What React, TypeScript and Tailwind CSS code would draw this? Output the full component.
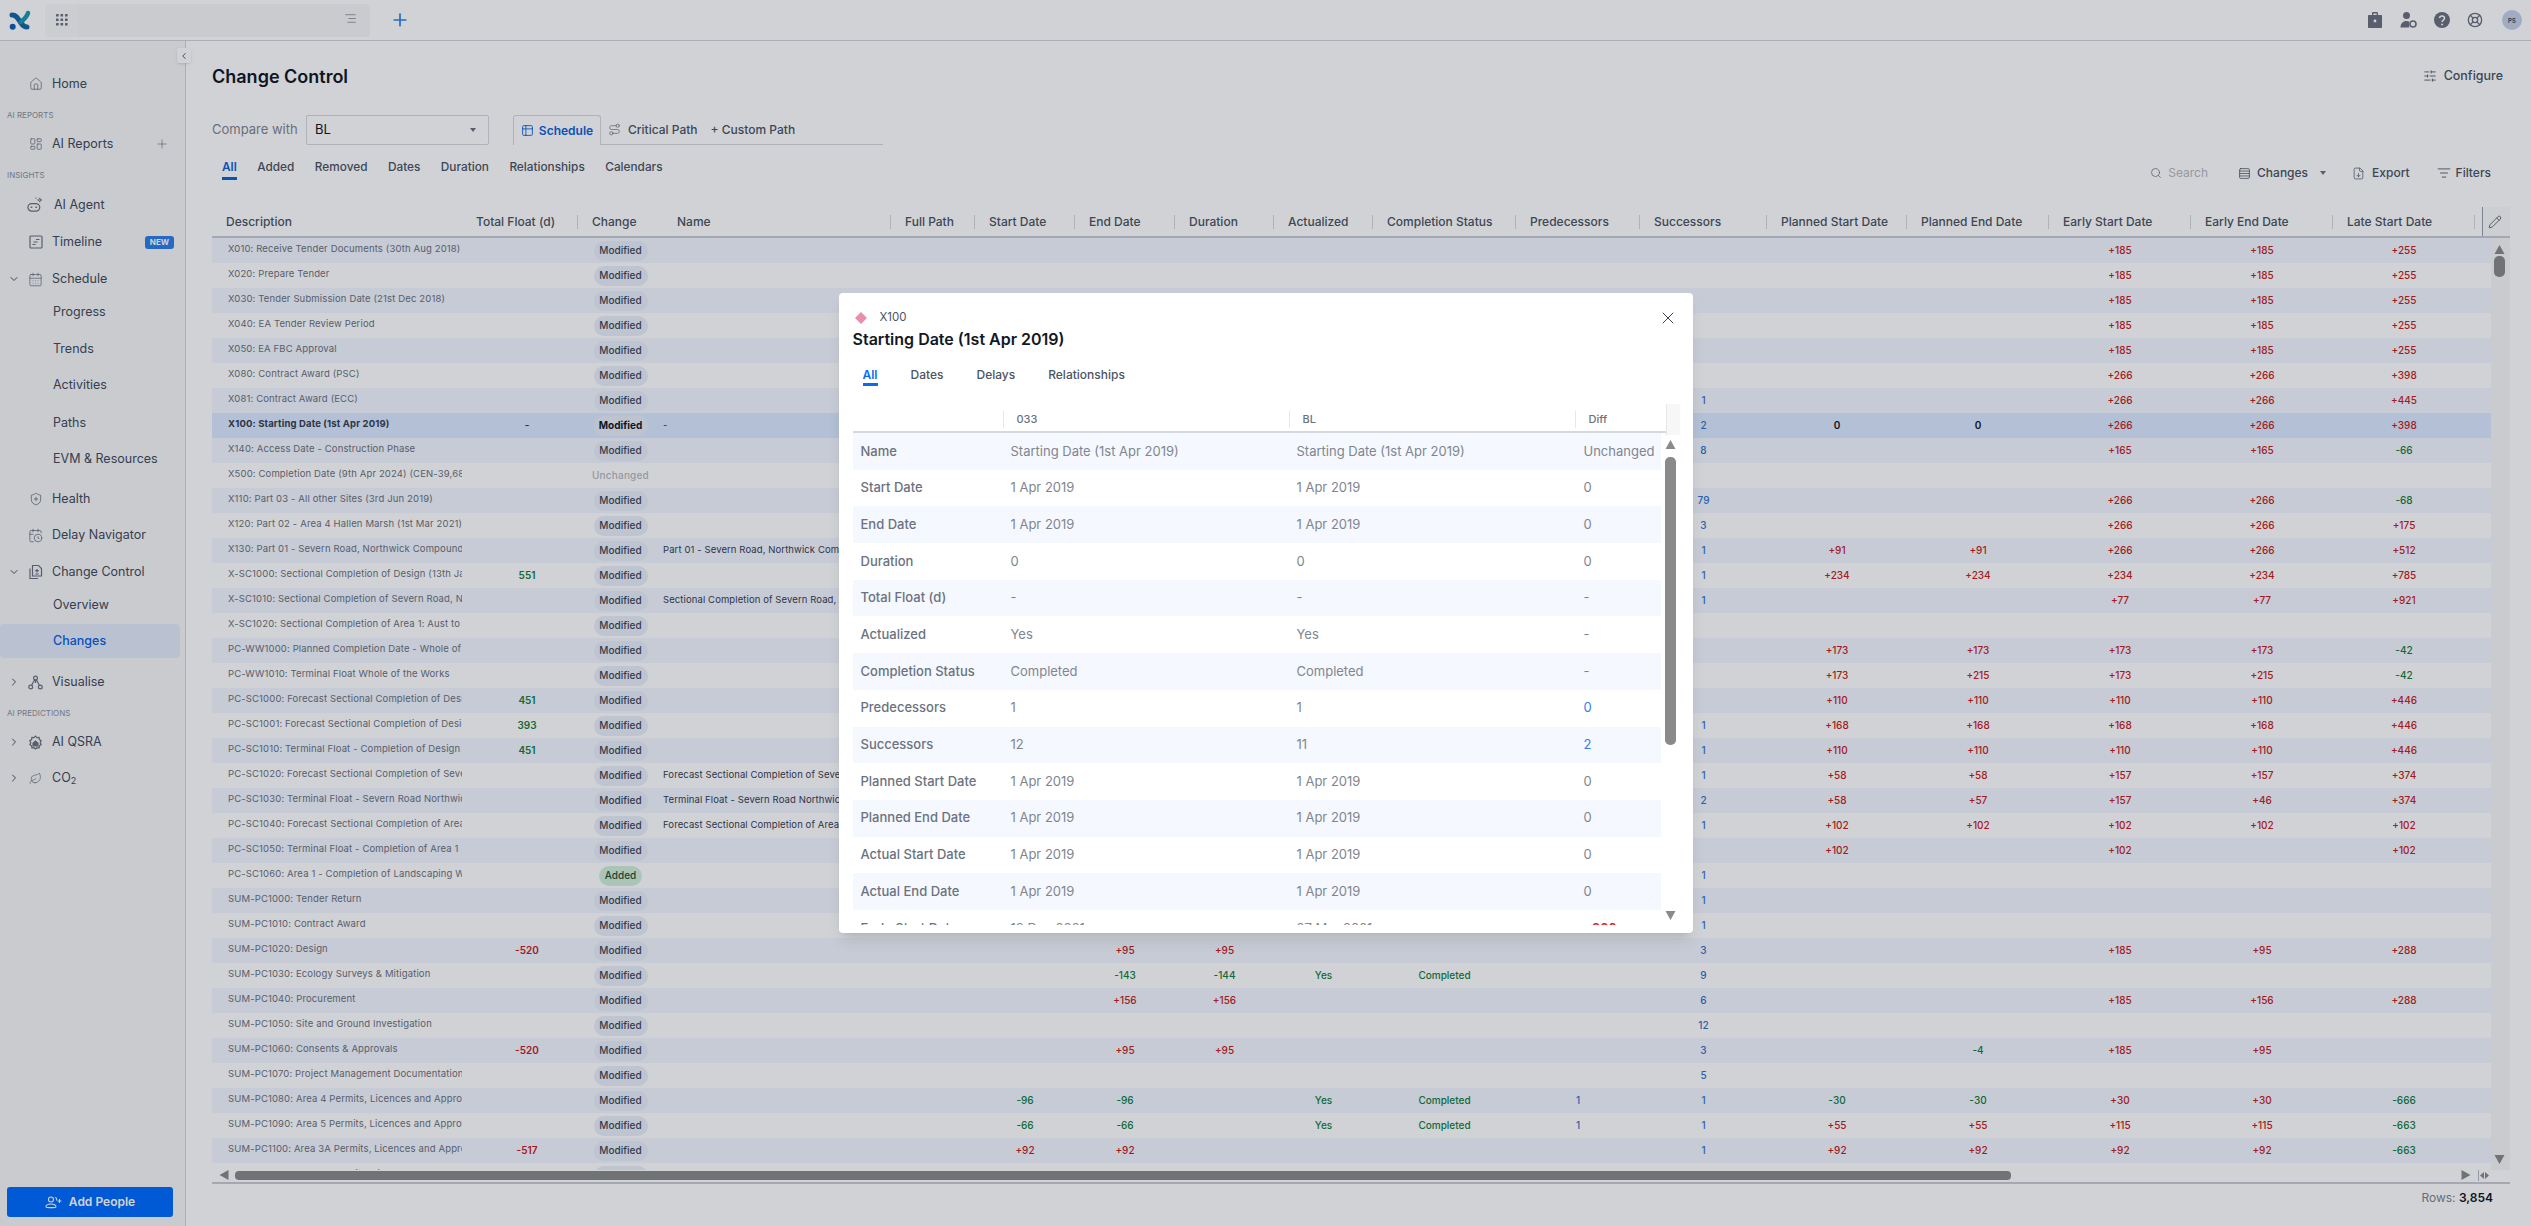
import React from 'react';
import {
  AlignRight, CalendarClock, CalendarDays, ChevronDown, ChevronLeft, ChevronRight, FileDown, Home, LayoutDashboard, Leaf,
  LifeBuoy, ListFilter, Pencil, Plus, Route, Rows4, Search, ShieldPlus, SlidersHorizontal, Table2, X,
} from 'lucide-react';

const GRID = 'grid grid-cols-[250px_116px_85px_228px_84px_100px_100px_99px_99px_143px_124px_127px_140px_142px_142px_142px_142px_16px]';

const HEADERS: [string, boolean][] = [
  ['Description', false], ['Total Float (d)', true], ['Change', false], ['Name', true], ['Full Path', true],
  ['Start Date', true], ['End Date', true], ['Duration', true], ['Actualized', true], ['Completion Status', true],
  ['Predecessors', true], ['Successors', true], ['Planned Start Date', true], ['Planned End Date', true],
  ['Early Start Date', true], ['Early End Date', true], ['Late Start Date', true],
];

// start|end|dur|actualized|status|pred|succ|plannedStart|plannedEnd|earlyStart|earlyEnd|lateStart
const ROWS: [string, string, string, string, string][] = [
  ['X010: Receive Tender Documents (30th Aug 2018)', '', 'Modified', '', '|||||||||+185|+185|+255'],
  ['X020: Prepare Tender', '', 'Modified', '', '|||||||||+185|+185|+255'],
  ['X030: Tender Submission Date (21st Dec 2018)', '', 'Modified', '', '|||||||||+185|+185|+255'],
  ['X040: EA Tender Review Period', '', 'Modified', '', '|||||||||+185|+185|+255'],
  ['X050: EA FBC Approval', '', 'Modified', '', '|||||||||+185|+185|+255'],
  ['X080: Contract Award (PSC)', '', 'Modified', '', '|||||||||+266|+266|+398'],
  ['X081: Contract Award (ECC)', '', 'Modified', '', '||||||1|||+266|+266|+445'],
  ['X100: Starting Date (1st Apr 2019)', '-', 'Modified', '-', '||||||2|0|0|+266|+266|+398'],
  ['X140: Access Date - Construction Phase', '', 'Modified', '', '||||||8|||+165|+165|-66'],
  ['X500: Completion Date (9th Apr 2024) (CEN-39,686)', '', 'Unchanged', '', '|||||||||||'],
  ['X110: Part 03 - All other Sites (3rd Jun 2019)', '', 'Modified', '', '||||||79|||+266|+266|-68'],
  ['X120: Part 02 - Area 4 Hallen Marsh (1st Mar 2021)', '', 'Modified', '', '||||||3|||+266|+266|+175'],
  ['X130: Part 01 - Severn Road, Northwick Compound (1st Dec 2020)', '', 'Modified', 'Part 01 - Severn Road, Northwick Compound', '||||||1|+91|+91|+266|+266|+512'],
  ['X-SC1000: Sectional Completion of Design (13th Jan 2023)', '551', 'Modified', '', '||||||1|+234|+234|+234|+234|+785'],
  ['X-SC1010: Sectional Completion of Severn Road, Northwick', '', 'Modified', 'Sectional Completion of Severn Road, Northwick', '||||||1|||+77|+77|+921'],
  ['X-SC1020: Sectional Completion of Area 1: Aust to Northwick', '', 'Modified', '', '|||||||||||'],
  ['PC-WW1000: Planned Completion Date - Whole of the Works', '', 'Modified', '', '|||||||+173|+173|+173|+173|-42'],
  ['PC-WW1010: Terminal Float Whole of the Works', '', 'Modified', '', '|||||||+173|+215|+173|+215|-42'],
  ['PC-SC1000: Forecast Sectional Completion of Design', '451', 'Modified', '', '|||||||+110|+110|+110|+110|+446'],
  ['PC-SC1001: Forecast Sectional Completion of Design', '393', 'Modified', '', '||||||1|+168|+168|+168|+168|+446'],
  ['PC-SC1010: Terminal Float - Completion of Design', '451', 'Modified', '', '||||||1|+110|+110|+110|+110|+446'],
  ['PC-SC1020: Forecast Sectional Completion of Severn Road', '', 'Modified', 'Forecast Sectional Completion of Severn Road', '||||||1|+58|+58|+157|+157|+374'],
  ['PC-SC1030: Terminal Float - Severn Road Northwick', '', 'Modified', 'Terminal Float - Severn Road Northwick', '||||||2|+58|+57|+157|+46|+374'],
  ['PC-SC1040: Forecast Sectional Completion of Area 1', '', 'Modified', 'Forecast Sectional Completion of Area 1', '||||||1|+102|+102|+102|+102|+102'],
  ['PC-SC1050: Terminal Float - Completion of Area 1', '', 'Modified', '', '|||||||+102||+102||+102'],
  ['PC-SC1060: Area 1 - Completion of Landscaping Works', '', 'Added', '', '||||||1|||||'],
  ['SUM-PC1000: Tender Return', '', 'Modified', '', '||||||1|||||'],
  ['SUM-PC1010: Contract Award', '', 'Modified', '', '||||||1|||||'],
  ['SUM-PC1020: Design', '-520', 'Modified', '', '|+95|+95||||3|||+185|+95|+288'],
  ['SUM-PC1030: Ecology Surveys & Mitigation', '', 'Modified', '', '|-143|-144|Yes|Completed||9|||||'],
  ['SUM-PC1040: Procurement', '', 'Modified', '', '|+156|+156||||6|||+185|+156|+288'],
  ['SUM-PC1050: Site and Ground Investigation', '', 'Modified', '', '||||||12|||||'],
  ['SUM-PC1060: Consents & Approvals', '-520', 'Modified', '', '|+95|+95||||3||-4|+185|+95|'],
  ['SUM-PC1070: Project Management Documentation', '', 'Modified', '', '||||||5|||||'],
  ['SUM-PC1080: Area 4 Permits, Licences and Approvals', '', 'Modified', '', '-96|-96||Yes|Completed|1|1|-30|-30|+30|+30|-666'],
  ['SUM-PC1090: Area 5 Permits, Licences and Approvals', '', 'Modified', '', '-66|-66||Yes|Completed|1|1|+55|+55|+115|+115|-663'],
  ['SUM-PC1100: Area 3A Permits, Licences and Approvals', '-517', 'Modified', '', '+92|+92|||||1|+92|+92|+92|+92|-663'],
  ['SUM-PC1110: Area 3B Permits, Licences and Approvals', '', 'Modified', '', '|||||||||||'],
];

const DETAIL: [string, string, string, string][] = [
  ['Name', 'Starting Date (1st Apr 2019)', 'Starting Date (1st Apr 2019)', 'Unchanged'],
  ['Start Date', '1 Apr 2019', '1 Apr 2019', '0'],
  ['End Date', '1 Apr 2019', '1 Apr 2019', '0'],
  ['Duration', '0', '0', '0'],
  ['Total Float (d)', '-', '-', '-'],
  ['Actualized', 'Yes', 'Yes', '-'],
  ['Completion Status', 'Completed', 'Completed', '-'],
  ['Predecessors', '1', '1', '0'],
  ['Successors', '12', '11', '2'],
  ['Planned Start Date', '1 Apr 2019', '1 Apr 2019', '0'],
  ['Planned End Date', '1 Apr 2019', '1 Apr 2019', '0'],
  ['Actual Start Date', '1 Apr 2019', '1 Apr 2019', '0'],
  ['Actual End Date', '1 Apr 2019', '1 Apr 2019', '0'],
  ['Early Start Date', '18 Dec 2021', '27 Mar 2021', '+266'],
];

const valueColor = (v: string, col: number, selected: boolean) => {
  if (col === 5 || col === 6) return 'text-[#2f74d0]';
  if (v === 'Yes' || v === 'Completed' || v.startsWith('-')) return 'text-[#15803d]';
  if (v.startsWith('+')) return 'text-[#c81e1e]';
  return selected ? 'text-[#111827] font-semibold' : 'text-[#374151]';
};

const Triangle: React.FC<{ dir: 'up' | 'down' | 'left' | 'right'; color?: string }> = ({ dir, color = '#8a8a8a' }) => {
  const points = { up: '5,1 10,10 0,10', down: '0,1 10,1 5,10', left: '10,0 10,10 1,5', right: '0,0 0,10 9,5' }[dir];
  return (
    <svg width="11" height="11" viewBox="0 0 10 11" className="shrink-0">
      <polygon points={points} fill={color} />
    </svg>
  );
};

const Logo = () => (
  <svg width="24" height="24" viewBox="8 8 24 24" fill="none" className="ml-[8px]">
    <path d="M12 15c5 0 6 4 9 8 2 3 4 4 6 4" stroke="#1268a8" strokeWidth="5" strokeLinecap="round" />
    <path d="M28 13c-1 4-4 6-7 9" stroke="#1a9bb0" strokeWidth="4.5" strokeLinecap="round" />
    <circle cx="12.7" cy="26.7" r="3" fill="#0a5fb4" />
  </svg>
);

const GridDots = () => (
  <svg width="12" height="12" viewBox="0 0 12 12" fill="#6b7280">
    {[0, 4.5, 9].map(y => [0, 4.5, 9].map(x => <rect key={`${x}-${y}`} x={x} y={y} width="2.6" height="2.6" rx="0.4" />))}
  </svg>
);

const BotIcon = () => (
  <svg width="18" height="18" viewBox="0 0 18 18" fill="none" stroke="#6b7280" strokeWidth="1.3">
    <rect x="1" y="7.5" width="12.5" height="8" rx="4" />
    <path d="M4.5 11.5h.5M9.5 11.5h.5" strokeLinecap="round" strokeWidth="1.6" />
    <path d="M13.5 1.5l.6 1.6 1.6.6-1.6.6-.6 1.6-.6-1.6-1.6-.6 1.6-.6zM9.5 1v1.4" strokeWidth="1" />
  </svg>
);

const TimelineIcon = () => (
  <svg width="14" height="14" viewBox="0 0 14 14" fill="none" stroke="#6b7280" strokeWidth="1.2">
    <rect x="1" y="1" width="12" height="12" rx="1" />
    <path d="M7 4.5h3.5M4.5 7h4M3.5 9.5h3" />
  </svg>
);

const StackIcon = () => (
  <svg width="15" height="16" viewBox="0 0 15 16" fill="none" stroke="#6b7280" strokeWidth="1.2">
    <path d="M4.5 1.5h6l3 3v7.5h-9z" />
    <path d="M2 4.5v10h8M9 5v3.5M7.2 6.7h3.6M7.2 10h3.6" />
  </svg>
);

const GraphIcon = () => (
  <svg width="15" height="15" viewBox="0 0 15 15" fill="none" stroke="#6b7280" strokeWidth="1.2">
    <circle cx="7.5" cy="3" r="1.9" />
    <circle cx="2.7" cy="12" r="1.9" />
    <circle cx="12.3" cy="12" r="1.9" />
    <path d="M6.7 4.8L3.6 10.3M8.3 4.8l3.1 5.5M7.5 5v3" />
  </svg>
);

const QsraIcon = () => (
  <svg width="15" height="15" viewBox="0 0 15 15" fill="none" stroke="#6b7280" strokeWidth="1.2">
    <path d="M7.5 1.2l1.5 1.500 2.100-.2.3 2.100 1.800 1.200-1 1.900 1 1.900-1.800 1.200-.3 2.100-2.100-.2-1.500 1.300-1.500-1.300-2.100.2-.3-2.100L1.800 9.600l1-1.900-1-1.900 1.800-1.200.3-2.100 2.100.2z" />
    <path d="M5 8.200l2.500-2.200L10 8.200v2.600H5z" fill="#6b7280" />
  </svg>
);

const Briefcase = () => (
  <svg width="16" height="18" viewBox="0 0 16 18" fill="#6b7280">
    <path d="M5 4V2.200C5 1.500 5.600 1 6.200 1h3.600c.6 0 1.200.5 1.200 1.200V4h3c.6 0 1 .4 1 1v11c0 .6-.4 1-1 1H2c-.6 0-1-.4-1-1V5c0-.6.4-1 1-1zm1.400 0h3.200V2.400H6.400z" />
    <circle cx="8" cy="10" r="1.400" fill="#ffffff" />
  </svg>
);

const UserGear = () => (
  <svg width="17" height="18" viewBox="0 0 17 18" fill="#6b7280">
    <circle cx="6.500" cy="4.500" r="3.500" />
    <path d="M0.500 16.500c0-4 2.500-6.500 6-6.500 1 0 1.900.2 2.600.6V16.500z" />
    <circle cx="13" cy="13" r="3" fill="none" stroke="#6b7280" strokeWidth="1.600" />
  </svg>
);

const HelpFilled = () => (
  <svg width="16" height="18" viewBox="0 0 18 18">
    <circle cx="9" cy="9" r="9" fill="#6b7280" />
    <path d="M6.200 6.800C6.400 5.300 7.500 4.500 9 4.500c1.600 0 2.800 1 2.800 2.400 0 2.200-2.700 2.200-2.700 4.300" fill="none" stroke="#fff" strokeWidth="1.700" />
    <circle cx="9.100" cy="14" r="1.100" fill="#fff" />
  </svg>
);

const Section: React.FC<{ label: string; className: string }> = ({ label, className }) => (
  <div className={`h-4 flex items-center pl-[7px] text-[8px] text-[#8b919c] ${className}`}>{label}</div>
);

const NavItem: React.FC<{
  icon: React.ReactNode; label: React.ReactNode; className?: string; chevron?: 'down' | 'right'; right?: React.ReactNode; textClass?: string;
}> = ({ icon, label, className = '', chevron, right, textClass = 'ml-[8px]' }) => (
  <div className={`h-9 flex items-center relative pr-[12px] text-[12.5px] text-[#424c5c] ${className}`}>
    <div className="w-[27px] flex justify-end pr-[7px]">
      {chevron === 'down' && <ChevronDown size={12} strokeWidth={2} className="text-[#4b5563]" />}
      {chevron === 'right' && <ChevronRight size={12} strokeWidth={2} className="text-[#4b5563]" />}
    </div>
    <div className="w-[17px] flex justify-center">{icon}</div>
    <span className={textClass}>{label}</span>
    <div className="ml-auto">{right}</div>
  </div>
);

const SubItem: React.FC<{ label: string; className?: string; active?: boolean }> = ({ label, className = '', active }) => (
  <div className={`flex items-center pl-[53px] text-[12.5px] ${active ? 'h-[34px] mr-[5px] rounded-[4px] bg-[#e3ecfb] font-medium text-[#0b62e0]' : 'h-9 text-[#424c5c]'} ${className}`}>
    {label}
  </div>
);

const Sidebar = () => (
  <aside className="w-[186px] shrink-0 flex flex-col border-r border-[#d0d3d9] bg-[#f5f6f8] relative">
    <div className="pt-[25px] flex flex-col">
      <NavItem icon={<Home size={14} strokeWidth={1.3} className="text-[#6b7280]" />} label="Home" />
      <Section label="AI REPORTS" className="mt-[5px]" />
      <NavItem
        className="mt-[3px]"
        icon={<LayoutDashboard size={14} strokeWidth={1.3} className="text-[#6b7280]" />}
        label="AI Reports"
        right={<Plus size={14} strokeWidth={1.1} className="text-[#6b7280] mr-[4px]" />}
      />
      <Section label="INSIGHTS" className="mt-[5px]" />
      <NavItem className="mt-1" icon={<BotIcon />} label="AI Agent" textClass="ml-[10px]" />
      <NavItem
        className="mt-px"
        icon={<TimelineIcon />}
        label="Timeline"
        right={<span className="block -mr-[1px] h-[13px] w-[29px] rounded-[3px] bg-[#2f7fe8] text-center text-[8px] leading-[13px] font-bold text-white">NEW</span>}
      />
      <NavItem className="mt-px" chevron="down" icon={<CalendarDays size={15} strokeWidth={1.2} className="text-[#6b7280]" />} label="Schedule" />
      <SubItem label="Progress" className="-mt-[3px]" />
      <SubItem label="Trends" className="mt-px" />
      <SubItem label="Activities" />
      <SubItem label="Paths" className="mt-[2px]" />
      <SubItem label="EVM & Resources" />
      <NavItem className="mt-1" icon={<ShieldPlus size={14} strokeWidth={1.4} className="text-[#6b7280]" />} label="Health" />
      <NavItem icon={<CalendarClock size={15} strokeWidth={1.3} className="text-[#6b7280]" />} label="Delay Navigator" />
      <NavItem className="mt-px" chevron="down" icon={<StackIcon />} label="Change Control" />
      <SubItem label="Overview" className="-mt-[3px]" />
      <SubItem label="Changes" className="mt-px" active />
      <NavItem className="mt-[6px]" chevron="right" icon={<GraphIcon />} label="Visualise" />
      <Section label="AI PREDICTIONS" className="mt-[5px]" />
      <NavItem className="mt-[3px]" chevron="right" icon={<QsraIcon />} label="AI QSRA" />
      <NavItem
        chevron="right"
        icon={<Leaf size={13} strokeWidth={1.3} className="text-[#6b7280]" />}
        label={<>CO<sub className="text-[9px]">2</sub></>}
      />
    </div>
    <button className="mt-auto mb-[9px] ml-[7px] mr-[12px] h-[30px] flex items-center justify-center gap-[7px] rounded-[3px] bg-[#006bff] text-[12px] font-semibold text-white">
      <svg width="17" height="13" viewBox="0 0 17 13" fill="none" stroke="#fff" strokeWidth="1.100">
        <circle cx="6" cy="3.500" r="2.500" />
        <path d="M1 11c0-2 2-3 5-3s5 1 5 3c0 1-10 1-10 0zM10 1.500c1.500.2 2 1.500 1.500 3M14.500 3v4M12.500 5h4" />
      </svg>
      Add People
    </button>
    <div className="absolute left-[177px] top-[7px] w-[14px] h-[15px] rounded-[2px] bg-white shadow-sm flex items-center justify-center">
      <ChevronLeft size={10} strokeWidth={2} className="text-[#374151]" />
    </div>
  </aside>
);

const TopBar = () => (
  <header className="h-[41px] shrink-0 flex items-center border-b border-[#d0d3d9] bg-white">
    <Logo />
    <div className="ml-[13px] w-[325px] h-[33px] flex items-center rounded-[4px] bg-[#f5f6f8]">
      <div className="w-[33px] h-full flex items-center justify-center rounded-l-[4px] bg-[#f8f9fa]"><GridDots /></div>
      <AlignRight size={13} strokeWidth={1.2} className="ml-auto mr-[13px] mb-[4px] text-[#6b7280]" />
    </div>
    <Plus size={20} strokeWidth={2} className="ml-[20px] text-[#2f7fe8]" />
    <div className="ml-auto flex items-center gap-[17px] pr-[9px]">
      <Briefcase />
      <UserGear />
      <HelpFilled />
      <LifeBuoy size={16} strokeWidth={2} className="text-[#6b7280]" />
      <div className="ml-[2px] w-5 h-5 rounded-full bg-[#c3d1ea] flex items-center justify-center text-[6px] font-semibold text-[#374151]">PS</div>
    </div>
  </header>
);

const Toolbar = () => (
  <div className="mt-[5px] h-6 flex items-center pr-[19px] text-[12px] font-medium text-[#4b5563]">
    <Search size={12} strokeWidth={1.5} className="text-[#6b7280]" />
    <span className="ml-[6px] font-normal text-[#b4b9c2]">Search</span>
    <Rows4 size={13} strokeWidth={1.4} className="ml-[30px] text-[#4b5563]" />
    <span className="ml-[6px]">Changes</span>
    <svg width="6" height="4" viewBox="0 0 6 4" className="ml-[12px]"><polygon points="0,0 6,0 3,4" fill="#6b7280" /></svg>
    <FileDown size={13} strokeWidth={1.3} className="ml-[26px] text-[#4b5563]" />
    <span className="ml-[7px]">Export</span>
    <ListFilter size={14} strokeWidth={1.5} className="ml-[27px] text-[#4b5563]" />
    <span className="ml-[5px]">Filters</span>
  </div>
);

const ChangePill: React.FC<{ kind: string; selected: boolean }> = ({ kind, selected }) => {
  if (kind === 'Unchanged') return <span className="text-[10px] font-medium tracking-[0.2px] text-[#b4b9c2]">Unchanged</span>;
  if (kind === 'Added') return <span className="h-5 w-[43px] rounded-full bg-[#d0efdc] flex items-center justify-center text-[10px] font-medium text-[#1f5135]">Added</span>;
  return (
    <span className={`h-5 w-[54px] rounded-full flex items-center justify-center text-[10px] ${selected ? 'bg-[#e8eef8] font-bold text-[#111827]' : 'bg-[#e9eefa] font-medium text-[#3f4754]'}`}>
      Modified
    </span>
  );
};

const TableRow: React.FC<{ row: [string, string, string, string, string]; index: number }> = ({ row, index }) => {
  const [desc, tf, change, name, rest] = row;
  const selected = index === 7;
  const cells = rest.split('|');
  return (
    <div className={`${GRID} h-[25px] shrink-0 ${selected ? 'bg-[#dbe9ff]' : index % 2 === 0 ? 'bg-[#f1f6ff]' : 'bg-white'}`}>
      <div className={`pl-[16px] flex items-center pb-[2px] overflow-hidden whitespace-nowrap text-[9.5px] tracking-[0.14px] ${selected ? 'font-bold text-[#374151]' : 'text-[#6b7280]'}`}>
        {desc}
      </div>
      <div className={`pl-[14px] flex items-center justify-center text-[10px] font-semibold ${tf === '-' ? 'text-[#374151]' : tf.startsWith('-') ? 'text-[#c81e1e]' : 'text-[#15803d]'}`}>
        {tf}
      </div>
      <div className="flex items-center justify-center"><ChangePill kind={change} selected={selected} /></div>
      <div className="flex items-center overflow-hidden whitespace-nowrap text-[9.5px] tracking-[0.1px] text-[#374151]">{name}</div>
      <div />
      {cells.map((v, i) => (
        <div key={i} className={`flex items-center justify-center text-[10px] font-medium ${valueColor(v, i, selected)}`}>{v}</div>
      ))}
    </div>
  );
};

const ChangeTable = () => (
  <div className="mt-[21px] flex-col flex">
    <div className="flex h-[31px] border-b-2 border-[#c8ccd3]">
      <div className="grid grid-cols-[250px_116px_85px_228px_84px_100px_100px_99px_99px_143px_124px_127px_140px_142px_142px_142px_142px]">
        {HEADERS.map(([label, divider]) => (
          <div key={label} className="flex items-center pl-[14px] text-[12px] font-medium whitespace-nowrap text-[#4b5563]">
            {label}
            {divider && <span className="ml-auto w-px h-[14px] bg-[#d5d8dd]" />}
          </div>
        ))}
      </div>
      <div className="ml-[7px] w-[28px] flex items-center justify-center border-l border-[#9aa0aa] bg-[#fafafa]">
        <Pencil size={14} strokeWidth={1.4} className="text-[#4b5563] ml-[-4px]" />
      </div>
    </div>
    <div className="flex h-[932px] overflow-hidden">
      <div className="flex flex-col">
        {ROWS.map((row, i) => <TableRow key={row[0]} row={row} index={i} />)}
      </div>
      <div className="w-[19px] flex flex-col items-center pr-[2px] pt-[6px] pb-[5px] bg-[#f5f6f8]">
        <Triangle dir="up" />
        <div className="mt-[1px] w-[11px] h-[21px] rounded-[5px] bg-[#8a8a8a]" />
        <div className="mt-auto"><Triangle dir="down" /></div>
      </div>
    </div>
    <div className="h-[14px] flex items-center border-b-2 border-[#c8ccd3] pb-[1px] pl-[6px]">
      <Triangle dir="left" />
      <div className="ml-[6px] w-[1776px] h-[9px] rounded-[4px] bg-[#8a8a8a]" />
      <div className="ml-[450px]"><Triangle dir="right" /></div>
      <div className="ml-[6px] h-full flex items-center border-l border-[#b4b9c2] pl-[1px]">
        <svg width="9" height="7" viewBox="0 0 9 7"><polygon points="4,0 4,7 0,3.500" fill="#8a8a8a" /><polygon points="5,0 5,7 9,3.500" fill="#8a8a8a" /></svg>
      </div>
    </div>
  </div>
);

const DetailModal = () => (
  <div className="w-[854px] h-[640px] flex flex-col rounded-[4px] bg-white pl-[14px] pr-[13px] pt-[16px] pb-[8px] shadow-lg">
    <div className="h-4 mt-px flex items-center pl-[2px]">
      <svg width="12" height="12" viewBox="0 0 12 12"><polygon points="6,0 12,6 6,12 0,6" fill="#e88fb0" /></svg>
      <span className="ml-[13px] text-[11.5px] text-[#4b5563]">X100</span>
      <X size={20} strokeWidth={1.2} className="ml-auto mr-[2px] text-[#374151]" />
    </div>
    <div className="mt-[2px] h-[22px] flex items-center text-[16px] font-semibold text-[#111827]">Starting Date (1st Apr 2019)</div>
    <div className="mt-[16px] h-5 flex pl-[10px] text-[12px] font-medium text-[#4b5563]">
      <div className="h-full border-b-[3px] border-[#0b6bf0] font-semibold text-[#0b6bf0]">All</div>
      <div className="ml-[33px]">Dates</div>
      <div className="ml-[33px]">Delays</div>
      <div className="ml-[33px]">Relationships</div>
    </div>
    <div className="mt-[18px] h-[29px] grid grid-cols-[150px_286px_286px_91px_14px] border-b-2 border-[#d5d8dd] text-[11px] text-[#6b7280]">
      <div />
      {['033', 'BL', 'Diff'].map(h => (
        <div key={h} className="flex items-center pl-[13px] font-medium border-l border-[#e5e7eb] my-[7px]">{h}</div>
      ))}
      <div className="bg-[#f7f7f8] border-l border-[#e5e7eb]" />
    </div>
    <div className="flex overflow-hidden">
      <div className="flex-1 h-[492px] overflow-hidden">
        {DETAIL.map(([label, a, b, diff], i) => (
          <div key={label} className={`grid grid-cols-[150px_286px_286px_86px] h-[36.7px] items-center text-[13px] ${i % 2 === 0 ? 'bg-[#f5f8fe]' : 'bg-white'}`}>
            <div className="pl-[8px] font-medium text-[#6b7280]">{label}</div>
            <div className="pl-[8px] text-[#80868f]">{a}</div>
            <div className="pl-[8px] text-[#80868f]">{b}</div>
            <div className={`pl-[9px] ${i === 7 || i === 8 ? 'text-[#2f7fe8]' : diff.startsWith('+') ? 'font-semibold text-[#e02424]' : 'text-[#80868f]'}`}>{diff}</div>
          </div>
        ))}
      </div>
      <div className="w-[19px] flex flex-col items-center pl-[4px] pr-[4px] pt-[6px] pb-[4px]">
        <Triangle dir="up" />
        <div className="mt-[7px] w-[11px] h-[288px] rounded-[5px] bg-[#8a8a8a]" />
        <div className="mt-auto"><Triangle dir="down" /></div>
      </div>
    </div>
  </div>
);

export default function App() {
  return (
    <div className="relative w-[2531px] h-[1226px] overflow-hidden flex flex-col bg-white [font-family:Inter,sans-serif]">
      <TopBar />
      <div className="flex flex-1 min-h-0">
        <Sidebar />
        <main className="flex-1 flex flex-col pl-[26px] pr-[21px]">
          <div className="mt-[21px] h-7 flex items-center">
            <h1 className="text-[18px] font-semibold text-[#111827]">Change Control</h1>
            <div className="ml-auto flex items-center gap-[7px] pr-[7px] text-[12.5px] font-medium text-[#4b5563]">
              <SlidersHorizontal size={14} strokeWidth={1.5} />
              Configure
            </div>
          </div>
          <div className="mt-[25px] h-[30px] flex items-stretch">
            <span className="w-[94px] flex items-center text-[13px] text-[#80868f]">Compare with</span>
            <div className="w-[183px] flex items-center pl-[8px] pr-[12px] rounded-[2px] border border-[#d5d8dd] text-[13px] text-[#111827]">
              BL
              <svg width="6" height="4" viewBox="0 0 6 4" className="ml-auto"><polygon points="0,0 6,0 3,4" fill="#6b7280" /></svg>
            </div>
            <div className="ml-[24px] w-[370px] flex items-stretch border-b border-[#d5d8dd] text-[12px] font-medium text-[#4b5563]">
              <div className="w-[88px] -mb-px flex items-center justify-center gap-[5px] rounded-t-[3px] border border-b-0 border-[#d5d8dd] bg-white font-semibold text-[#0b62e0]">
                <Table2 size={13} strokeWidth={1.6} />
                Schedule
              </div>
              <Route size={13} strokeWidth={1.3} className="self-center ml-[7px] text-[#6b7280]" />
              <span className="self-center ml-[7px]">Critical Path</span>
              <span className="self-center ml-[13px]">+ Custom Path</span>
            </div>
          </div>
          <div className="mt-[11px] h-[30px] flex items-start justify-between">
            <div className="h-6 flex pl-[10px] text-[11.8px] font-medium text-[#4b5563]">
              <div className="h-[24px] border-b-[3px] border-[#0b62e0] pt-[3px] font-semibold text-[#0b62e0]">All</div>
              {['Added', 'Removed', 'Dates', 'Duration', 'Relationships', 'Calendars'].map(t => (
                <div key={t} className="ml-[20.5px] pt-[3px]">{t}</div>
              ))}
            </div>
            <Toolbar />
          </div>
          <ChangeTable />
          <div className="h-[28px] flex items-center justify-end pr-[17px] text-[12px] text-[#80868f]">
            Rows:&nbsp;<span className="font-semibold text-[#111827]">3,854</span>
          </div>
        </main>
      </div>
      <div className="absolute inset-0 flex items-center justify-center bg-[#000316]/[0.18]">
        <DetailModal />
      </div>
    </div>
  );
}
